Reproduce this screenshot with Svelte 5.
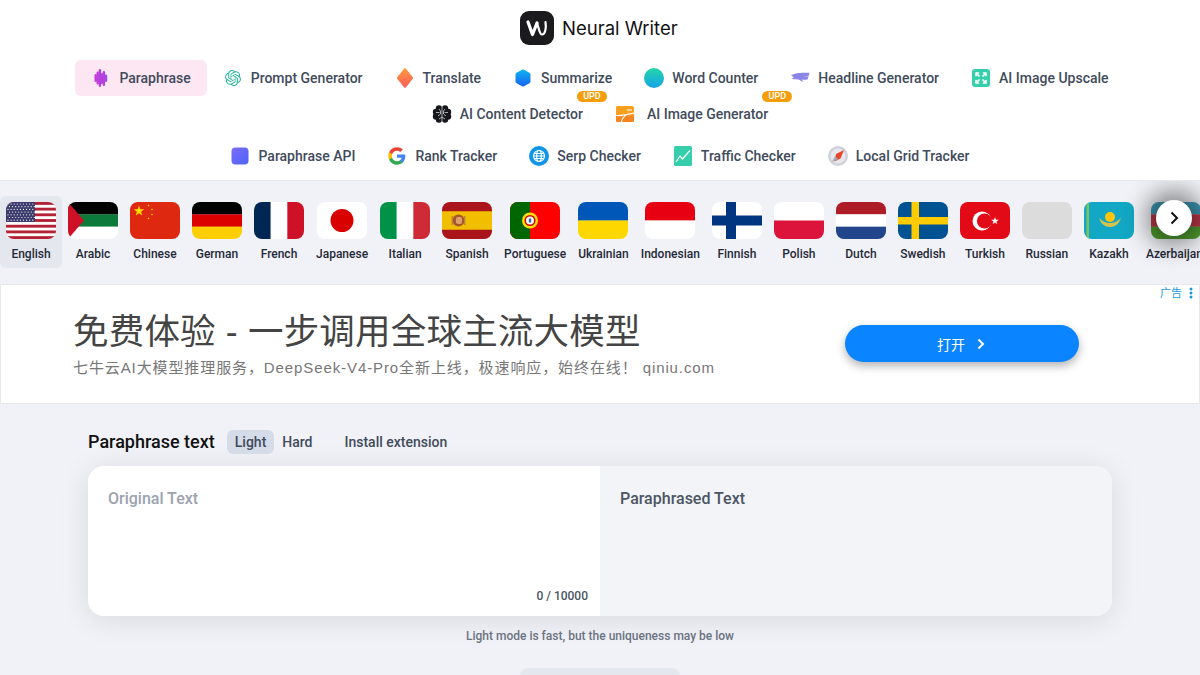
<script>
	const openai = 'M22.2819 9.8211a5.9847 5.9847 0 0 0-.5157-4.9108 6.0462 6.0462 0 0 0-6.5098-2.9A6.0651 6.0651 0 0 0 4.9807 4.1818a5.9847 5.9847 0 0 0-3.9977 2.9 6.0462 6.0462 0 0 0 .7427 7.0966 5.98 5.98 0 0 0 .511 4.9107 6.051 6.051 0 0 0 6.5146 2.9001A5.9847 5.9847 0 0 0 13.2599 24a6.0557 6.0557 0 0 0 5.7718-4.2058 5.9894 5.9894 0 0 0 3.9977-2.9001 6.0557 6.0557 0 0 0-.7475-7.0729zm-9.022 12.6081a4.4755 4.4755 0 0 1-2.8764-1.0408l.1419-.0804 4.7783-2.7582a.7948.7948 0 0 0 .3927-.6813v-6.7369l2.02 1.1686a.071.071 0 0 1 .038.052v5.5826a4.504 4.504 0 0 1-4.4945 4.4944zm-9.6607-4.1254a4.4708 4.4708 0 0 1-.5346-3.0137l.142.0852 4.783 2.7582a.7712.7712 0 0 0 .7806 0l5.8428-3.3685v2.3324a.0804.0804 0 0 1-.0332.0615L9.74 19.9502a4.4992 4.4992 0 0 1-6.1408-1.6464zM2.3408 7.8956a4.485 4.485 0 0 1 2.3655-1.9728V11.6a.7664.7664 0 0 0 .3879.6765l5.8144 3.3543-2.0201 1.1685a.0757.0757 0 0 1-.071 0l-4.8303-2.7865A4.504 4.504 0 0 1 2.3408 7.872zm16.5963 3.8558L13.1038 8.364 15.1192 7.2a.0757.0757 0 0 1 .071 0l4.8303 2.7913a4.4944 4.4944 0 0 1-.6765 8.1042v-5.6772a.79.79 0 0 0-.407-.667zm2.0107-3.0231l-.142-.0852-4.7735-2.7818a.7759.7759 0 0 0-.7854 0L9.409 9.2297V6.8974a.0662.0662 0 0 1 .0284-.0615l4.8303-2.7866a4.4992 4.4992 0 0 1 6.6802 4.66zM8.3065 12.863l-2.02-1.1638a.0804.0804 0 0 1-.038-.0567V6.0742a4.4992 4.4992 0 0 1 7.3757-3.4537l-.142.0805L8.704 5.459a.7948.7948 0 0 0-.3927.6813zm1.0976-2.3654l2.602-1.4998 2.6069 1.4998v2.9994l-2.5974 1.4997-2.6067-1.4997Z';

	const icons = {
		wave: `<g fill="url(#gWave)"><rect x="3.500" y="6" width="2.400" height="8" rx="1.200"/><rect x="5.500" y="3.500" width="2.400" height="13" rx="1.200"/><rect x="7.700" y="1" width="2.400" height="18" rx="1.200"/><rect x="9.800" y="5" width="2.200" height="11" rx="1.100"/><rect x="11.700" y="3" width="2.400" height="15" rx="1.200"/><rect x="13.800" y="6.500" width="2.400" height="7.500" rx="1.200"/></g>`,
		openai: `<g transform="translate(2 2) scale(.667)"><path fill="#2fb59a" d="${openai}"/></g>`,
		diamond: `<path fill="url(#gDiamond)" d="M9.200 .6c.5-.6 1.100-.6 1.600 0l7 8.600c.4.500.4 1.100 0 1.600l-7 8.600c-.5.600-1.100.6-1.600 0l-7-8.600c-.4-.5-.4-1.100 0-1.600z"/>`,
		hex: `<path fill="url(#gHex)" d="M9 1.800c.7-.4 1.300-.4 2 0l5.400 3c.7.400 1.100 1 1.100 1.800v6.800c0 .8-.4 1.400-1.100 1.800l-5.400 3c-.7.400-1.300.4-2 0l-5.400-3c-.7-.4-1.100-1-1.100-1.800V6.600c0-.8.400-1.400 1.100-1.800z"/>`,
		circle: `<circle cx="10" cy="10" r="10" fill="url(#gCircle)"/>`,
		headline: `<path fill="#8b85e8" d="M1 7 7 5.200c3-.6 7-.7 12.500-.4l-1 3.400-5.800 .3 5.800 .2-1 2.700c-2.200.5-4 .5-5.800 0l2 2.900-5.200-2.800-7-.5 2.400-1.400z"/>`,
		expand: `<rect x="1" y="1" width="18" height="18" rx="3" fill="#35d0ab"/><g fill="none" stroke="#fff" stroke-width="1.700" stroke-linecap="round" stroke-linejoin="round"><path d="M5 7.500V5h2.500M15 7.500V5h-2.500M5 12.500V15h2.500M15 12.500V15h-2.500"/><path d="M5.500 5.500 8 8M14.500 5.500 12 8M5.500 14.500 8 12M14.500 14.500 12 12"/></g>`,
		brain: `<g fill="#15171c"><circle cx="7" cy="4.500" r="3.200"/><circle cx="13" cy="4.500" r="3.200"/><circle cx="4" cy="8" r="3.200"/><circle cx="16" cy="8" r="3.200"/><circle cx="4" cy="12.500" r="3.200"/><circle cx="16" cy="12.500" r="3.200"/><circle cx="7" cy="15.500" r="3.200"/><circle cx="13" cy="15.500" r="3.200"/><rect x="5" y="4" width="10" height="12"/></g><path fill="none" stroke="#e8e8ea" stroke-width=".7" d="M10 2v16M7 5l1.500 2v3L6 12M13 5l-1.500 2v3L14 12M4 8.500h3.500M16 8.500h-3.500M7 15l3-2 3 2"/>`,
		picture: `<rect x="1" y="2" width="18" height="16" rx="1.500" fill="#f9a01f"/><path d="M1 11.500h18v5c0 .9-.6 1.500-1.500 1.500h-15c-.9 0-1.500-.6-1.500-1.500z" fill="#f5861f"/><path fill="none" stroke="#fff" stroke-width="1.200" d="M1 11.500c5 .4 8-.6 11.500-1.200M6.500 18c.5-3 2-6 6-7.700l6.500-1.300M12 6h5"/>`,
		api: `<rect x="1.500" y="1.500" width="17" height="17" rx="4" fill="url(#gApi)"/>`,
		google: `<g transform="translate(.5 .5) scale(.79)"><path fill="#4285F4" d="M22.560 12.250c0-.78-.07-1.530-.2-2.250H12v4.260h5.920c-.26 1.370-1.040 2.530-2.210 3.310v2.770h3.570c2.080-1.920 3.280-4.740 3.280-8.090z"/><path fill="#34A853" d="M12 23c2.970 0 5.460-.98 7.280-2.660l-3.570-2.770c-.98.660-2.230 1.060-3.710 1.060-2.860 0-5.290-1.930-6.160-4.530H2.180v2.840C3.990 20.530 7.700 23 12 23z"/><path fill="#FBBC05" d="M5.840 14.090c-.22-.66-.35-1.360-.35-2.090s.13-1.430.35-2.090V7.070H2.180C1.430 8.550 1 10.220 1 12s.43 3.450 1.180 4.930l2.850-2.220.81-.62z"/><path fill="#EA4335" d="M12 5.380c1.620 0 3.060.56 4.210 1.640l3.150-3.150C17.450 2.090 14.970 1 12 1 7.700 1 3.990 3.470 2.180 7.070l3.660 2.840c.87-2.600 3.300-4.530 6.160-4.530z"/></g>`,
		globe: `<circle cx="10" cy="10" r="10" fill="#0f96e6"/><g fill="none" stroke="#fff" stroke-width="1.200"><circle cx="10" cy="10" r="5.500"/><ellipse cx="10" cy="10" rx="2.400" ry="5.500"/><path d="M4.500 10h11M5.200 7.500h9.600M5.200 12.500h9.600"/></g>`,
		chart: `<rect x="1" y="0" width="18" height="20" rx="1.500" fill="#35d0ab"/><path fill="none" stroke="#fff" stroke-width="1.200" stroke-linejoin="round" d="M3 16l4-6 2.500 3L17 4.500"/>`,
		compass: `<circle cx="10" cy="10" r="10" fill="#cfd2d9"/><circle cx="10" cy="10" r="7.500" fill="#e6e8ed"/><path fill="#e9472b" d="M16 4 12.500 12.500 6.500 15.500 8 8z"/><path fill="#a6a9b2" d="M4 16 7 10l3 3z"/>`
	};

	const navRows = [
		[
			{ label: 'Paraphrase', icon: 'wave', active: true },
			{ label: 'Prompt Generator', icon: 'openai' },
			{ label: 'Translate', icon: 'diamond' },
			{ label: 'Summarize', icon: 'hex' },
			{ label: 'Word Counter', icon: 'circle' },
			{ label: 'Headline Generator', icon: 'headline' },
			{ label: 'AI Image Upscale', icon: 'expand' }
		],
		[
			{ label: 'AI Content Detector', icon: 'brain', upd: true },
			{ label: 'AI Image Generator', icon: 'picture', upd: true, wide: true }
		],
		[
			{ label: 'Paraphrase API', icon: 'api' },
			{ label: 'Rank Tracker', icon: 'google' },
			{ label: 'Serp Checker', icon: 'globe' },
			{ label: 'Traffic Checker', icon: 'chart' },
			{ label: 'Local Grid Tracker', icon: 'compass' }
		]
	];

	const hStripes = (...rows) => {
		const h = 37 / rows.length;
		return rows.map((c, i) => `<rect y="${i * h}" width="50" height="${h + 0.2}" fill="${c}"/>`).join('');
	};
	const vStripes = (...cols) => {
		const w = 50 / cols.length;
		return cols.map((c, i) => `<rect x="${i * w}" width="${w + 0.2}" height="37" fill="${c}"/>`).join('');
	};
	const cross = (bg, fg, x, w, y, h) =>
		`<rect width="50" height="37" fill="${bg}"/><rect x="${x}" width="${w}" height="37" fill="${fg}"/><rect y="${y}" width="50" height="${h}" fill="${fg}"/>`;

	const usFlag = () => {
		let out = '<rect width="50" height="37" fill="#fff"/>';
		for (let i = 0; i < 7; i++) out += `<rect y="${(i * 37) / 6.5}" width="50" height="2.850" fill="#b22234"/>`;
		out += '<rect width="29" height="20" fill="#3c3b6e"/>';
		for (let r = 0; r < 7; r++) {
			for (let c = 0; c < 9; c++) {
				out += `<circle cx="${2 + c * 3.100 + (r % 2) * 1.500}" cy="${2 + r * 2.700}" r=".6" fill="#fff"/>`;
			}
		}
		return out;
	};

	const star = (x, y, s, fill) => {
		const pts = [];
		for (let i = 0; i < 10; i++) {
			const r = i % 2 ? s * 0.4 : s;
			const a = -Math.PI / 2 + (i * Math.PI) / 5;
			pts.push(`${(x + r * Math.cos(a)).toFixed(2)},${(y + r * Math.sin(a)).toFixed(2)}`);
		}
		return `<polygon points="${pts.join(' ')}" fill="${fill}"/>`;
	};

	const flags = [
		{ label: 'English', svg: usFlag(), active: true },
		{ label: 'Arabic', svg: hStripes('#000', '#0b7a3b', '#fff') + '<path d="M0 0 16 18.500 0 37z" fill="#ce1126"/>' },
		{
			label: 'Chinese',
			svg:
				'<rect width="50" height="37" fill="#de2910"/>' +
				star(9, 9, 5.500, '#ffde00') +
				star(18.500, 3.500, 1.300, '#ffde00') +
				star(22, 7.500, 1.300, '#ffde00') +
				star(22, 12.500, 1.300, '#ffde00') +
				star(18.500, 16.500, 1.300, '#ffde00')
		},
		{ label: 'German', svg: hStripes('#000', '#dd0000', '#ffce00') },
		{ label: 'French', svg: vStripes('#002654', '#fff', '#ce1126') },
		{
			label: 'Japanese',
			svg: '<rect width="50" height="37" fill="#fff"/><circle cx="25" cy="18.500" r="11.500" fill="#d90000"/>'
		},
		{ label: 'Italian', svg: vStripes('#009246', '#fff', '#ce2b37') },
		{
			label: 'Spanish',
			svg:
				'<rect width="50" height="37" fill="#aa151b"/><rect y="9.250" width="50" height="18.500" fill="#f1bf00"/>' +
				'<circle cx="16.500" cy="18.500" r="6" fill="#a8562a"/><rect x="14" y="15" width="6" height="7" rx="2" fill="#dba06c"/>' +
				'<rect x="9.500" y="14" width="1.400" height="9" fill="#b9863a"/><rect x="22" y="14" width="1.400" height="9" fill="#b9863a"/>'
		},
		{
			label: 'Portuguese',
			svg:
				'<rect width="50" height="37" fill="#f00"/><rect width="20" height="37" fill="#060"/>' +
				'<circle cx="20" cy="18.500" r="8" fill="#ffe000"/><circle cx="20" cy="18.500" r="4.800" fill="#fff" stroke="#d40000" stroke-width="1.500"/>' +
				'<rect x="18.800" y="16.500" width="2.400" height="4" fill="#3a5fb0"/>'
		},
		{ label: 'Ukrainian', svg: hStripes('#0057b7', '#ffd700') },
		{ label: 'Indonesian', svg: hStripes('#e70011', '#fff') },
		{ label: 'Finnish', svg: cross('#fff', '#003580', 14, 10, 13.500, 10) },
		{ label: 'Polish', svg: hStripes('#fff', '#dc143c') },
		{ label: 'Dutch', svg: hStripes('#ae1c28', '#fff', '#21468b') },
		{ label: 'Swedish', svg: cross('#005293', '#fecb00', 13.500, 7.500, 15, 7.500) },
		{
			label: 'Turkish',
			svg:
				'<rect width="50" height="37" fill="#e30a17"/><circle cx="22" cy="19" r="9.500" fill="#fff"/><circle cx="24.500" cy="19" r="7.600" fill="#e30a17"/>' +
				star(35, 19, 4, '#fff')
		},
		{ label: 'Russian', svg: '<rect width="50" height="37" fill="#dcdcdc"/>' },
		{
			label: 'Kazakh',
			svg:
				'<rect width="50" height="37" fill="#12a7c4"/><rect x="2.500" width="2.500" height="37" fill="#7fc45a"/>' +
				'<circle cx="26" cy="15" r="5" fill="#fec50c"/><path d="M15 16c2 6 6 9 11 9s9-3 11-9c-3 3-7 5-11 5s-8-2-11-5z" fill="#d8c34a"/>'
		},
		{ label: 'Azerbaijani', svg: hStripes('#3f9cb8', '#c0394a', '#509e2f') }
	];
</script>

<div class="page">
	<header class="top">
		<div class="brand">
			<span class="logo">
				<svg viewBox="0 0 34 34" width="34" height="34" aria-hidden="true">
					<path
						fill="none"
						stroke="#fff"
						stroke-width="3.200"
						stroke-linecap="round"
						stroke-linejoin="round"
						d="M8 11l4.500 12.500 4.500-11.500"
					/>
					<path
						fill="none"
						stroke="#fff"
						stroke-width="2.200"
						stroke-linecap="round"
						d="M17 12c1.500 4 2.500 11.500 5 11.500 3 0 4.500-6 3.500-12.500"
					/>
				</svg>
			</span>
			<span class="brand-name">Neural Writer</span>
		</div>

		<nav class="nav">
			{#each navRows as row}
				<div class="nav-row">
					{#each row as item}
						<a class="nav-item" class:active={item.active} href="#top">
							<svg class="nav-icon" class:wide={item.wide} viewBox={item.wide ? '0 0 24 20' : '0 0 20 20'} aria-hidden="true">
								{@html icons[item.icon]}
							</svg>
							<span>{item.label}</span>
							{#if item.upd}<b class="upd">UPD</b>{/if}
						</a>
					{/each}
				</div>
			{/each}
		</nav>
	</header>

	<svg class="defs" width="0" height="0" aria-hidden="true">
		<defs>
			<linearGradient id="gWave" x1="0" x2="1" y1="0" y2="0">
				<stop offset="0" stop-color="#f02bd0" />
				<stop offset="1" stop-color="#6f5cf0" />
			</linearGradient>
			<linearGradient id="gDiamond" x1="0" x2="0" y1="0" y2="1">
				<stop offset="0" stop-color="#ff9a3d" />
				<stop offset="1" stop-color="#fb5b5b" />
			</linearGradient>
			<linearGradient id="gHex" x1="0" x2="0" y1="0" y2="1">
				<stop offset="0" stop-color="#0bb5f0" />
				<stop offset="1" stop-color="#1a62f2" />
			</linearGradient>
			<linearGradient id="gCircle" x1="0" x2="0" y1="0" y2="1">
				<stop offset="0" stop-color="#24d6a6" />
				<stop offset="1" stop-color="#15a4ea" />
			</linearGradient>
			<linearGradient id="gApi" x1="0" x2="1" y1="0" y2="1">
				<stop offset="0" stop-color="#7b6cf6" />
				<stop offset="1" stop-color="#4f63fb" />
			</linearGradient>
		</defs>
	</svg>

	<section class="langs">
		<div class="lang-track">
			{#each flags as flag}
				<div class="lang" class:active={flag.active}>
					<svg class="flag" viewBox="0 0 50 37" aria-hidden="true">{@html flag.svg}</svg>
					<span>{flag.label}</span>
				</div>
			{/each}
		</div>
		<button class="next" type="button" aria-label="Next">
			<svg viewBox="0 0 16 16" width="16" height="16">
				<path d="M5.500 2.500 11 8l-5.500 5.500" fill="none" stroke="#111" stroke-width="2" />
			</svg>
		</button>
	</section>

	<aside class="ad">
		<div class="ad-copy">
			<div class="ad-title">免费体验 - 一步调用全球主流大模型</div>
			<div class="ad-sub">七牛云AI大模型推理服务，DeepSeek-V4-Pro全新上线，极速响应，始终在线！ qiniu.com</div>
		</div>
		<button class="ad-btn" type="button">
			打开
			<svg viewBox="0 0 12 12" width="12" height="12" aria-hidden="true">
				<path d="M3.500 1.500 8 6l-4.500 4.500" fill="none" stroke="#fff" stroke-width="2" />
			</svg>
		</button>
		<div class="ad-flag">
			广告
			<svg viewBox="0 0 4 12" width="4" height="12" aria-hidden="true">
				<circle cx="2" cy="2" r="1.500" fill="#1a9bd7" />
				<circle cx="2" cy="6" r="1.500" fill="#1a9bd7" />
				<circle cx="2" cy="10" r="1.500" fill="#1a9bd7" />
			</svg>
		</div>
	</aside>

	<main class="tool">
		<div class="tool-head">
			<h1>Paraphrase text</h1>
			<div class="modes">
				<span class="mode on">Light</span>
				<span class="mode">Hard</span>
			</div>
			<a class="install" href="#top">Install extension</a>
		</div>

		<div class="panes">
			<div class="pane source">
				<div class="placeholder">Original Text</div>
				<div class="count">0 / 10000</div>
			</div>
			<div class="pane result">
				<div class="result-title">Paraphrased Text</div>
			</div>
		</div>

		<p class="hint">Light mode is fast, but the uniqueness may be low</p>
		<div class="submit"></div>
	</main>
</div>

<style>
	:global(body) {
		margin: 0;
		background: #f1f2f7;
		overflow: hidden;
	}

	.page {
		height: 675px;
		overflow: hidden;
		font-family: Roboto, 'Noto Sans CJK SC', sans-serif;
		color: #414b5c;
	}

	.defs {
		position: absolute;
	}

	.top {
		background: #fff;
		border-bottom: 1px solid #e5e7eb;
		padding: 11px 0 6px;
		height: 163px;
	}

	.brand {
		display: flex;
		justify-content: center;
		align-items: center;
		gap: 8px;
		height: 34px;
		margin-bottom: 15px;
	}

	.logo {
		width: 34px;
		height: 34px;
		border-radius: 9px;
		background: #1b1b1d;
		display: block;
	}

	.brand-name {
		font-family: Inter, sans-serif;
		font-size: 18.500px;
		font-weight: 400;
		color: #111;
		width: 118px;
		white-space: nowrap;
	}

	.nav {
		display: flex;
		flex-direction: column;
	}

	.nav-row {
		display: flex;
		justify-content: center;
	}

	.nav-row:last-child {
		margin-top: 6px;
	}

	.nav-item {
		position: relative;
		display: flex;
		align-items: center;
		gap: 8px;
		height: 36px;
		padding: 0 16px;
		border-radius: 6px;
		font-size: 14px;
		font-weight: 500;
		line-height: 20px;
		color: #414b5c;
		text-decoration: none;
		white-space: nowrap;
	}

	.nav-item.active {
		background: #fce7f3;
	}

	.nav-icon {
		width: 20px;
		height: 20px;
		flex: none;
	}

	.nav-icon.wide {
		width: 24px;
	}

	.upd {
		position: absolute;
		top: -5px;
		right: -8px;
		width: 30px;
		height: 11px;
		border-radius: 6px;
		background: #f59e0b;
		color: #fff;
		font-size: 9px;
		font-weight: 500;
		line-height: 11px;
		text-align: center;
	}

	.langs {
		position: relative;
		height: 103px;
		overflow: hidden;
	}

	.lang-track {
		display: flex;
		padding-top: 15px;
	}

	.lang {
		flex: none;
		display: flex;
		flex-direction: column;
		align-items: center;
		padding: 6px;
		border-radius: 6px;
		font-size: 12px;
		font-weight: 500;
		line-height: 16px;
		color: #1f2937;
		height: 60px;
	}

	.lang.active {
		background: #e5e7ef;
	}

	.flag {
		width: 50px;
		height: 37px;
		border-radius: 8px;
		margin-bottom: 7px;
		flex: none;
	}

	.next {
		position: absolute;
		left: 1156px;
		top: 19px;
		width: 36px;
		height: 36px;
		padding: 0;
		border: 0;
		border-radius: 50%;
		background: #fff;
		display: flex;
		align-items: center;
		justify-content: center;
		box-shadow: 0 0 24px 10px rgba(0, 0, 0, 0.45);
	}

	.ad {
		position: relative;
		height: 120px;
		box-sizing: border-box;
		background: #fff;
		border: 1px solid #e5e7eb;
		display: flex;
		align-items: center;
		padding-left: 72px;
		font-family: 'Liberation Sans', 'Noto Sans CJK SC', sans-serif;
	}

	.ad-copy {
		width: 772px;
		flex: none;
		padding-bottom: 1px;
	}

	.ad-title {
		font-size: 35.500px;
		font-weight: 400;
		letter-spacing: 0.2px;
		line-height: 46px;
		margin-bottom: 3px;
		color: #444;
		white-space: nowrap;
	}

	.ad-sub {
		font-size: 15px;
		line-height: 20px;
		letter-spacing: 0.9px;
		color: #777;
		white-space: nowrap;
	}

	.ad-btn {
		width: 234px;
		height: 37px;
		margin-top: -1px;
		border: 0;
		border-radius: 19px;
		background: #0a84ff;
		color: #fff;
		font-family: inherit;
		font-size: 14px;
		display: flex;
		align-items: center;
		justify-content: center;
		gap: 10px;
		box-shadow: 0 4px 10px rgba(0, 0, 0, 0.3);
	}

	.ad-flag {
		position: absolute;
		top: 1px;
		right: 6px;
		display: flex;
		align-items: center;
		gap: 7px;
		font-size: 11px;
		line-height: 14px;
		color: #1a9bd7;
	}

	.tool {
		width: 1024px;
		margin: 0 auto;
	}

	.tool-head {
		display: flex;
		align-items: center;
		height: 24px;
		margin: 26px 0 12px;
	}

	h1 {
		margin: 0 12px 0 0;
		font-size: 18px;
		font-weight: 500;
		line-height: 24px;
		color: #111;
	}

	.modes {
		display: flex;
		gap: 0;
	}

	.mode {
		padding: 0 8px;
		height: 24px;
		border-radius: 6px;
		font-size: 14px;
		font-weight: 500;
		line-height: 24px;
	}

	.mode.on {
		background: #d5dce8;
	}

	.install {
		margin-left: 24px;
		font-size: 14px;
		font-weight: 500;
		color: #414b5c;
		text-decoration: none;
	}

	.panes {
		display: flex;
		height: 150px;
		border-radius: 16px;
		overflow: hidden;
		box-shadow: 0 4px 30px rgba(0, 0, 0, 0.1);
	}

	.pane {
		position: relative;
		flex: 1;
		padding: 23px 20px;
		font-size: 16px;
		font-weight: 500;
		line-height: 20px;
	}

	.source {
		background: #fff;
		color: #9ca3af;
	}

	.result {
		background: #f3f4f8;
		color: #4b5563;
	}

	.count {
		position: absolute;
		right: 12px;
		bottom: 12px;
		font-size: 12px;
		line-height: 16px;
		color: #4b5563;
	}

	.hint {
		margin: 12px 0 0;
		text-align: center;
		font-size: 12px;
		font-weight: 500;
		line-height: 16px;
		color: #6b7280;
	}

	.submit {
		width: 160px;
		height: 48px;
		margin: 24px auto 0;
		border-radius: 8px;
		background: #e5e7ef;
	}
</style>
